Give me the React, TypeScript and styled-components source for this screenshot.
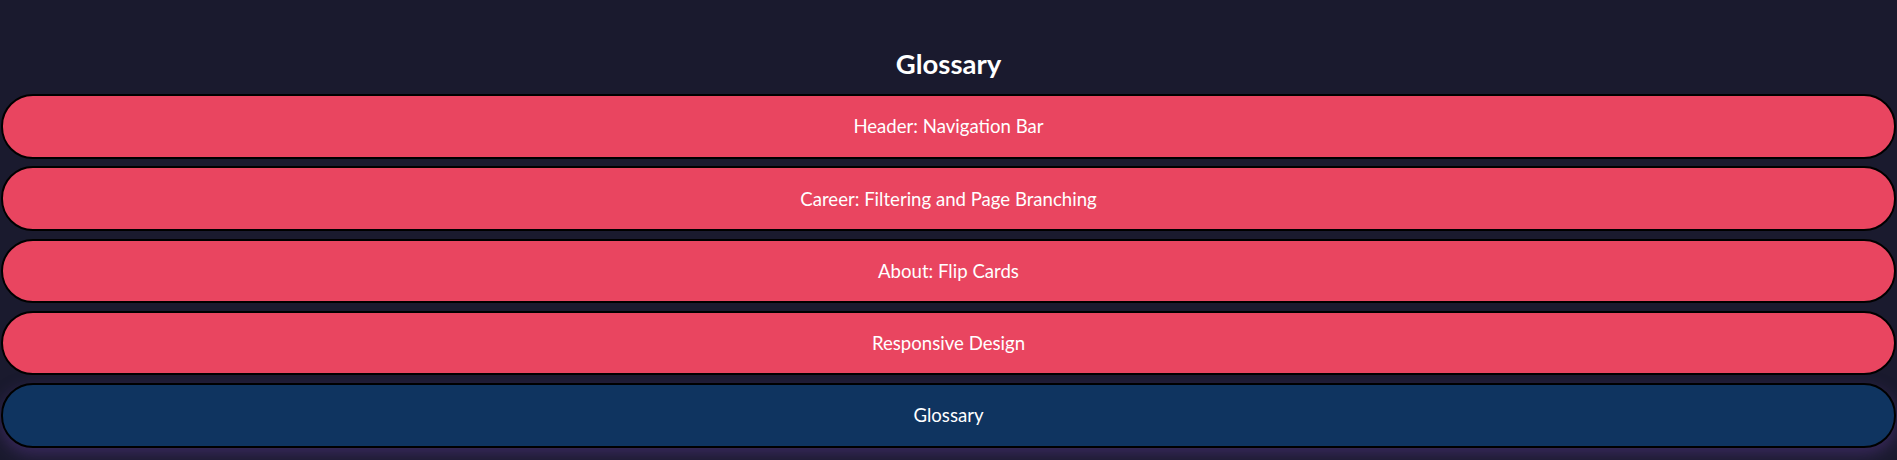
import React, { useState } from 'react';
import styled, { createGlobalStyle } from 'styled-components';

const GlobalStyle = createGlobalStyle`
  html, body {
    margin: 0;
    padding: 0;
    background: #1a1a2e;
  }
  body {
    font-family: Lato, 'Noto Sans', sans-serif;
    color: #fff;
  }
`

const Page = styled.div`
  height: 460px;
  overflow: hidden;
  padding: 0 1px;
  box-sizing: border-box;
`

const Title = styled.h2`
  margin: 0;
  padding-top: 48px;
  height: 32px;
  line-height: 32px;
  font-size: 27.5px;
  font-weight: 700;
  text-align: center;
  color: #fff;
`

const List = styled.div`
  display: flex;
  flex-direction: column;
  gap: 7.75px;
  margin-top: 14px;
`

const SectionButton = styled.button<{ $active: boolean }>`
  display: flex;
  align-items: center;
  justify-content: center;
  width: 100%;
  height: 64.5px;
  box-sizing: border-box;
  border: 2px solid #000;
  border-radius: 32px;
  background: ${(p) => (p.$active ? '#0f3460' : '#e94560')};
  box-shadow: ${(p) => (p.$active ? '0 6px 16px rgba(83, 52, 131, 0.55)' : 'none')};
  color: #fff;
  font-family: Lato, 'Noto Sans', sans-serif;
  font-size: 18.6px;
  cursor: pointer;
  padding: 0;
`

const sections = [
  'Header: Navigation Bar',
  'Career: Filtering and Page Branching',
  'About: Flip Cards',
  'Responsive Design',
  'Glossary',
]

function App() {
  const [active, setActive] = useState<number>(4)

  return (<Page>
    <GlobalStyle />
    <Title>Glossary</Title>
    <List>
      {sections.map((item, i) => (
        <SectionButton key={item} $active={i === active} onClick={() => setActive(i)}>
          {item}
        </SectionButton>
      ))}
    </List>
  </Page>);
}

export default App;
